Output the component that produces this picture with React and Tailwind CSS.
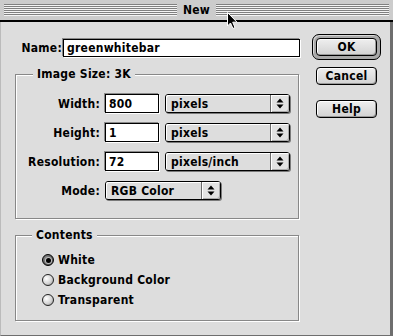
import React from 'react'

const font = { fontFamily: '"DejaVu Sans Condensed", "DejaVu Sans", sans-serif', fontStretch: 'condensed' }

function Stripes() {
  return <div className="flex-1 h-[12px] bg-[repeating-linear-gradient(#808080_0_1px,#f4f4f4_1px_2px)]" />
}

function Field({ value, className }) {
  return (
    <div className={`h-[19px] bg-white border border-black shadow-[-1px_-1px_0_#8a8a8a,1px_1px_0_#fff] flex items-center pl-[3px] ${className}`}>
      {value}
    </div>
  )
}

function Arrows() {
  return (
    <svg width="8" height="11" viewBox="0 0 8 11">
      <path d="M4 0.5 L7.5 4.5 L0.5 4.5 Z" fill="#000" />
      <path d="M0.5 6.5 L7.5 6.5 L4 10.5 Z" fill="#000" />
    </svg>
  )
}

function Popup({ value, className }) {
  return (
    <div className={`h-[19px] flex border border-black rounded-[3px] bg-[#dddddd] shadow-[1px_1px_0_#7a7a7a] ${className}`}>
      <div className="flex-1 flex items-center pl-[5px] rounded-l-[2px] shadow-[inset_1px_1px_0_#fff]">{value}</div>
      <div className="w-[19px] flex items-center justify-center border-l border-[#6a6a6a] bg-[#e2e2e2] rounded-r-[2px] shadow-[inset_1px_1px_0_#fff,inset_-1px_-1px_0_#aaa]">
        <Arrows />
      </div>
    </div>
  )
}

function Button({ label, className = '' }) {
  return (
    <div className={`w-[61px] h-[18px] flex items-center justify-center border border-black rounded-[4px] bg-[linear-gradient(#efefef,#d2d2d2)] shadow-[inset_1px_1px_0_#fff,inset_-1px_-1px_0_#999] ${className}`}>
      {label}
    </div>
  )
}

function Radio({ checked, label }) {
  return (
    <div className="h-[20px] flex items-center gap-[4px]">
      {checked ? (
        <div className="w-[12px] h-[12px] rounded-full border border-black bg-[radial-gradient(circle_at_40%_40%,#9a9a9a,#3a3a3a)] flex items-center justify-center">
          <div className="w-[5px] h-[5px] rounded-full bg-black shadow-[0_0_0_1px_#bbb]" />
        </div>
      ) : (
        <div className="w-[12px] h-[12px] rounded-full border border-[#222] bg-[radial-gradient(circle_at_35%_35%,#ffffff,#d4d4d4_55%,#8a8a8a)]" />
      )}
      <span>{label}</span>
    </div>
  )
}

function Group({ title, className, labelLeft, children }) {
  return (
    <div className={`relative border border-[#888] shadow-[1px_1px_0_#fff,inset_1px_1px_0_#fff] ${className}`}>
      <span className={`absolute -top-[8px] px-[4px] bg-[#dddddd] leading-[14px] whitespace-pre ${labelLeft}`}>{title}</span>
      {children}
    </div>
  )
}

export default function App() {
  return (
    <div className="relative w-[393px] h-[336px] bg-[#dddddd] text-[12px] font-bold tracking-[0.25px] text-black overflow-hidden" style={font}>
      <div className="h-[22px] bg-[#cccccc] border-b-2 border-black flex items-center px-[4px]">
        <Stripes />
        <span className="px-[6px] leading-[12px]">New</span>
        <Stripes />
      </div>

      <div className="h-[314px] flex pl-[14px] border-l border-[#bbbbbb] border-r-[3px] border-b border-r-[#6e6e6e] border-b-[#6e6e6e]">
        <div className="w-[285px] pt-[17px] flex flex-col">
          <div className="h-[18px] flex items-center">
            <span className="w-[48px] text-right pr-[1px]">Name:</span>
            <Field value="greenwhitebar" className="w-[237px] !h-[18px] pl-[3px]" />
          </div>

          <Group title="Image Size: 3K" className="mt-[17px] w-[284px] h-[145px] pt-[19px]" labelLeft="left-[17px]">
            <div className="flex flex-col gap-[10px]">
              <div className="flex items-center">
                <span className="w-[84px] text-right mr-[5px]">Width:</span>
                <Field value="800" className="w-[54px]" />
                <Popup value="pixels" className="ml-[6px] w-[125px]" />
              </div>
              <div className="flex items-center">
                <span className="w-[84px] text-right mr-[5px]">Height:</span>
                <Field value="1" className="w-[54px]" />
                <Popup value="pixels" className="ml-[6px] w-[125px]" />
              </div>
              <div className="flex items-center">
                <span className="w-[84px] text-right mr-[5px]">Resolution:</span>
                <Field value="72" className="w-[54px]" />
                <Popup value="pixels/inch" className="ml-[6px] w-[125px]" />
              </div>
              <div className="flex items-center">
                <span className="w-[84px] text-right mr-[5px]">Mode:</span>
                <Popup value="RGB Color" className="w-[116px]" />
              </div>
            </div>
          </Group>

          <Group title="Contents" className="mt-[16px] w-[284px] h-[86px] pt-[14px] pl-[26px]" labelLeft="left-[16px]">
            <Radio checked label="White" />
            <Radio label="Background Color" />
            <Radio label="Transparent" />
          </Group>
        </div>

        <div className="ml-[12px] pt-[12px] flex flex-col">
          <div className="w-[69px] h-[26px] p-[3px] border border-black rounded-[7px] bg-[#a9a9a9] shadow-[inset_1px_1px_0_#d8d8d8]">
            <Button label="OK" className="w-full" />
          </div>
          <Button label="Cancel" className="ml-[4px] mt-[7px]" />
          <Button label="Help" className="ml-[4px] mt-[15px]" />
        </div>
      </div>

      <svg className="absolute left-[226px] top-[11px]" width="13" height="19" viewBox="0 0 13 19">
        <path d="M1.5 1.5 L1.5 15 L4.5 12 L7 17.5 L9 16.5 L6.7 11.2 L11 11.2 Z" fill="#000" stroke="#fff" strokeWidth="1" strokeLinejoin="miter" />
      </svg>
    </div>
  )
}
